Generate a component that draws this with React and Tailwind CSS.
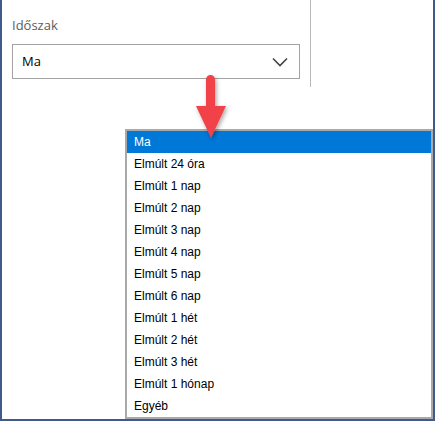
import React from 'react';

const options = [
  'Ma',
  'Elmúlt 24 óra',
  'Elmúlt 1 nap',
  'Elmúlt 2 nap',
  'Elmúlt 3 nap',
  'Elmúlt 4 nap',
  'Elmúlt 5 nap',
  'Elmúlt 6 nap',
  'Elmúlt 1 hét',
  'Elmúlt 2 hét',
  'Elmúlt 3 hét',
  'Elmúlt 1 hónap',
  'Egyéb',
];

const PointerArrow = () => (
  <svg
    className="absolute left-[186px] top-[70px] pointer-events-none"
    width="48"
    height="76"
    viewBox="0 0 48 76"
  >
    <defs>
      <filter id="arrowShadow" x="-50%" y="-50%" width="200%" height="200%">
        <feDropShadow dx="1.5" dy="2" stdDeviation="2" floodColor="#000" floodOpacity="0.35" />
      </filter>
    </defs>
    <g filter="url(#arrowShadow)">
      <path d="M18 9.5 a4.5 4.5 0 0 1 9 0 V36 H38 L23 68 L8 36 H18 Z" fill="#f2434a" />
    </g>
  </svg>
);

const App = () => {
  const selected = 'Ma';

  return (
    <div className="relative w-[435px] h-[421px] bg-white border-l-2 border-r-2 border-b-2 border-[#41598b] overflow-hidden">
      {/* filter panel */}
      <div
        className="-ml-[2px] w-[311px] h-[87px] bg-white border-l-2 border-r border-l-[#cfd3dc] border-r-[#b9b9b9] pt-[17px] pl-[10px]"
        style={{ fontFamily: '"Open Sans", "Noto Sans", sans-serif' }}
      >
        <div className="text-[13px] leading-[16px] text-[#5b5b5b]">Időszak</div>
        <div className="mt-[11px] w-[288px] h-[35px] border border-[#a3a3a3] flex items-center justify-between pl-[9px] pr-[11px]">
          <span className="text-[13px] text-black">{selected}</span>
          <svg width="16" height="10" viewBox="0 0 16 10">
            <path d="M1 1.5 L8 8.5 L15 1.5" fill="none" stroke="#444" strokeWidth="1.6" />
          </svg>
        </div>
      </div>

      {/* open dropdown list */}
      <div
        className="ml-[123px] mt-[42px] w-[308px] border-2 border-[#a9a9a9] bg-white"
        style={{ fontFamily: '"Liberation Sans", Arial, sans-serif' }}
      >
        {options.map((opt) => (
          <div
            key={opt}
            className={
              opt === selected
                ? 'h-[22px] leading-[22px] pl-[7px] text-[12px] bg-[#0078d7] text-white'
                : 'h-[22px] leading-[22px] pl-[7px] text-[12px] text-black'
            }
          >
            {opt}
          </div>
        ))}
      </div>

      <PointerArrow />
    </div>
  );
};

export default App;
